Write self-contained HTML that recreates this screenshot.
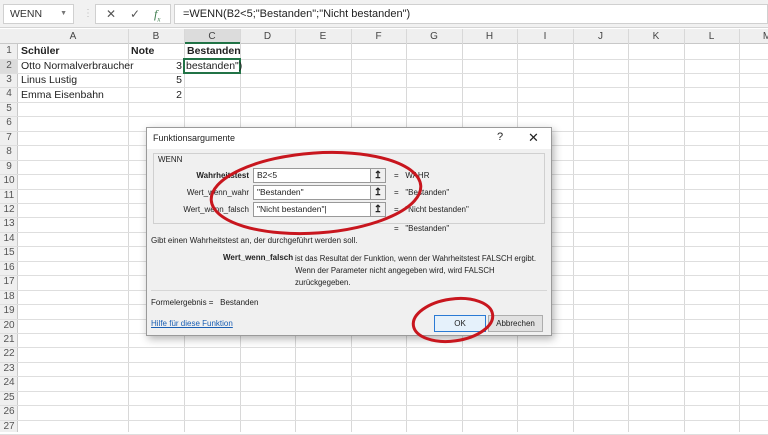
<!DOCTYPE html><html><head><meta charset="utf-8"><style>
*{margin:0;padding:0;box-sizing:border-box}
body{width:768px;height:432px;overflow:hidden;background:#fff;font-family:"Liberation Sans",sans-serif;font-size:10.5px;color:#222;position:relative}
.a{position:absolute;white-space:nowrap}
.vl{position:absolute;top:29px;bottom:0;width:1px;background:#d8d8d8}
.hl{position:absolute;left:0;right:0;height:1px;background:#dedede}
.rn{position:absolute;left:0;width:18px;text-align:center;color:#555;font-size:10px}
.ch{position:absolute;top:29px;height:15px;line-height:15px;text-align:center;color:#444;font-size:10px}
.in{position:absolute;height:15px;border:1px solid #999;background:#fff;font-size:8.5px;line-height:13px;padding-left:3px}
.up{position:absolute;width:16px;height:15px;border:1px solid #999;background:#f0f0f0;text-align:center;font-size:10px;line-height:13px;font-weight:bold}
.d{font-size:8px;color:#222}
</style></head><body>
<div class="a" style="left:0;top:0;width:768px;height:28px;background:#f1f1f1;border-bottom:1px solid #d4d4d4"></div>
<div class="a" style="left:3px;top:4px;width:71px;height:20px;background:#fff;border:1px solid #d0d0d0;font-size:10.5px;line-height:18px;padding-left:6px;color:#333">WENN<span style="position:absolute;right:6px;font-size:7px;color:#777">▼</span></div>
<div class="a" style="left:83px;top:8px;color:#bbb;font-size:10px">⋮</div>
<div class="a" style="left:95px;top:4px;width:76px;height:20px;background:#fff;border:1px solid #d0d0d0;color:#555;font-size:12px;line-height:18px"><span class="a" style="left:10px">✕</span><span class="a" style="left:34px">✓</span><span class="a" style="left:58px;color:#3a7a4a;font-style:italic;font-family:'Liberation Serif',serif">f<sub style="font-size:7px">x</sub></span></div>
<div class="a" style="left:174px;top:4px;width:594px;height:20px;background:#fff;border:1px solid #d0d0d0;font-size:11px;line-height:18px;padding-left:8px;color:#222">=WENN(B2&lt;5;"Bestanden";"Nicht bestanden")</div>
<div class="a" style="left:0;top:29px;width:768px;height:15px;background:#efefef;border-bottom:1px solid #c8c8c8"></div>
<div class="a" style="left:0;top:44px;width:18px;height:388px;background:#efefef;border-right:1px solid #c8c8c8"></div>
<div class="a" style="left:184px;top:29px;width:56px;height:15px;background:#dcdcdc;border-bottom:2px solid #217346"></div>
<div class="a" style="left:0;top:60px;width:18px;height:14px;background:#dcdcdc"></div>
<div class="vl" style="left:128px"></div><div class="vl" style="left:184px"></div><div class="vl" style="left:240px"></div><div class="vl" style="left:295px"></div><div class="vl" style="left:351px"></div><div class="vl" style="left:406px"></div><div class="vl" style="left:462px"></div><div class="vl" style="left:517px"></div><div class="vl" style="left:573px"></div><div class="vl" style="left:628px"></div><div class="vl" style="left:684px"></div><div class="vl" style="left:739px"></div>
<div class="ch" style="left:18px;width:110px">A</div><div class="ch" style="left:128px;width:56px">B</div><div class="ch" style="left:184px;width:56px">C</div><div class="ch" style="left:240px;width:55px">D</div><div class="ch" style="left:295px;width:56px">E</div><div class="ch" style="left:351px;width:55px">F</div><div class="ch" style="left:406px;width:56px">G</div><div class="ch" style="left:462px;width:55px">H</div><div class="ch" style="left:517px;width:56px">I</div><div class="ch" style="left:573px;width:55px">J</div><div class="ch" style="left:628px;width:56px">K</div><div class="ch" style="left:684px;width:55px">L</div><div class="ch" style="left:739px;width:56px">M</div>
<div id="rows"></div>
<script>
var h='';for(var i=1;i<=27;i++){var t=44+(i-1)*14.45;h+='<div class="hl" style="top:'+(t+14.45).toFixed(1)+'px"></div><div class="rn" style="top:'+t.toFixed(1)+'px;height:14px;line-height:14px">'+i+'</div>';}document.getElementById('rows').innerHTML=h;
</script>
<div class="a" style="left:21px;top:44px;line-height:14px;font-weight:bold">Schüler</div>
<div class="a" style="left:131px;top:44px;line-height:14px;font-weight:bold">Note</div>
<div class="a" style="left:187px;top:44px;line-height:14px;font-weight:bold">Bestanden</div>
<div class="a" style="left:21px;top:59px;line-height:14px">Otto Normalverbraucher</div>
<div class="a" style="left:21px;top:73px;line-height:14px">Linus Lustig</div>
<div class="a" style="left:21px;top:88px;line-height:14px">Emma Eisenbahn</div>
<div class="a" style="left:128px;width:54px;text-align:right;top:59px;line-height:14px">3</div>
<div class="a" style="left:128px;width:54px;text-align:right;top:73px;line-height:14px">5</div>
<div class="a" style="left:128px;width:54px;text-align:right;top:88px;line-height:14px">2</div>
<div class="a" style="left:183px;top:58px;width:58px;height:16px;border:2px solid #217346;background:#fff;line-height:12px;padding-left:1px">bestanden")</div>
<div class="a" style="left:146px;top:127px;width:406px;height:209px;background:#f0f0f0;border:1px solid #9a9a9a;box-shadow:2px 3px 8px rgba(0,0,0,.3)">
<div class="a" style="left:0;top:0;width:404px;height:21px;background:#fff"></div>
<div class="a" style="left:6px;top:5px;font-size:9px">Funktionsargumente</div>
<div class="a" style="left:350px;top:3px;font-size:11px">?</div>
<div class="a" style="left:381px;top:2px;font-size:13px">✕</div>
<div class="a" style="left:6px;top:25px;width:392px;height:71px;border:1px solid #d0d0d0"></div>
<div class="a" style="left:9px;top:27px;font-size:8px;background:#f0f0f0;padding:0 2px">WENN</div>
<div class="a d" style="right:302px;top:43px;font-weight:bold">Wahrheitstest</div>
<div class="a d" style="right:302px;top:60px">Wert_wenn_wahr</div>
<div class="a d" style="right:302px;top:77px">Wert_wenn_falsch</div>
<div class="in" style="left:106px;top:40px;width:118px">B2&lt;5</div><div class="up" style="left:223px;top:40px">↥</div>
<div class="in" style="left:106px;top:57px;width:118px">"Bestanden"</div><div class="up" style="left:223px;top:57px">↥</div>
<div class="in" style="left:106px;top:74px;width:118px">"Nicht bestanden"|</div><div class="up" style="left:223px;top:74px">↥</div>
<div class="a d" style="left:247px;top:43px">=&nbsp;&nbsp; WAHR</div>
<div class="a d" style="left:247px;top:60px">=&nbsp;&nbsp; "Bestanden"</div>
<div class="a d" style="left:247px;top:77px">=&nbsp;&nbsp; "Nicht bestanden"</div>
<div class="a d" style="left:247px;top:96px">=&nbsp;&nbsp; "Bestanden"</div>
<div class="a d" style="left:4px;top:108px">Gibt einen Wahrheitstest an, der durchgeführt werden soll.</div>
<div class="a d" style="left:76px;top:125px;font-weight:bold">Wert_wenn_falsch</div>
<div class="a d" style="left:148px;top:125px;line-height:12px;font-size:7.8px">ist das Resultat der Funktion, wenn der Wahrheitstest FALSCH ergibt.<br>Wenn der Parameter nicht angegeben wird, wird FALSCH<br>zurückgegeben.</div>
<div class="a" style="left:4px;top:162px;width:396px;height:1px;background:#d6d6d6"></div>
<div class="a d" style="left:4px;top:170px">Formelergebnis =&nbsp;&nbsp; Bestanden</div>
<div class="a d" style="left:4px;top:191px;color:#1a5fb4;text-decoration:underline">Hilfe für diese Funktion</div>
<div class="a d" style="left:287px;top:187px;width:52px;height:17px;border:1px solid #2a7ad4;background:#e5f1fb;text-align:center;line-height:15px">OK</div>
<div class="a d" style="left:341px;top:187px;width:55px;height:17px;border:1px solid #adadad;background:#e1e1e1;text-align:center;line-height:15px">Abbrechen</div>
</div>
<svg class="a" style="left:0;top:0" width="768" height="432"><g fill="none" stroke="#c8161e" stroke-width="3"><ellipse cx="316" cy="193" rx="105" ry="40" transform="rotate(-4 316 193)"/><ellipse cx="453" cy="320" rx="40" ry="21" transform="rotate(-8 453 320)"/></g></svg>
</body></html>
